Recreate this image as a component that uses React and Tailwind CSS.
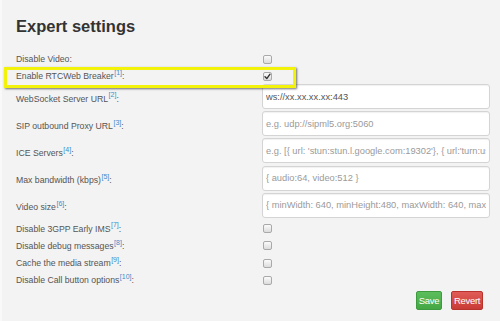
import React from "react";

function Sup({ n }) {
  return (
    <>
      <sup className="text-[7px] text-[#428bca] -top-[0.6em] ml-[0.5px]">[{n}]</sup>
      <span>:</span>
    </>
  );
}

function Checkbox({ checked }) {
  return (
    <div className="w-[9px] h-[9px] rounded-[2px] border border-[#a9a9a9] bg-gradient-to-b from-[#fbfbfb] to-[#dcdcdc] flex items-center justify-center">
      {checked && (
        <svg width="7" height="7" viewBox="0 0 7 7">
          <path d="M1 3.8 L2.8 5.6 L6 1.2" stroke="#333" strokeWidth="1.4" fill="none" strokeLinecap="round" strokeLinejoin="round" />
        </svg>
      )}
    </div>
  );
}

function CheckRow({ label, n, checked, h }) {
  return (
    <div className={`flex items-center ${h}`}>
      <div className="w-[262px] shrink-0 pl-[16px] text-[8.7px] leading-[10px] text-[#555]">
        {label}
        {n ? <Sup n={n} /> : <span>:</span>}
      </div>
      <div className="pl-[1px]">
        <Checkbox checked={checked} />
      </div>
    </div>
  );
}

function InputRow({ label, n, value, placeholder }) {
  return (
    <div className="flex items-start h-[25px] mb-[2.2px]">
      <div className="w-[262px] shrink-0 pl-[16px] pt-[9.5px] text-[8.7px] leading-[10px] text-[#555]">
        {label}
        <Sup n={n} />
      </div>
      <div className="w-[228px] shrink-0 h-[25px] bg-white border border-[#d4d4d4] rounded-[3px] shadow-[inset_0_1px_1px_rgba(0,0,0,0.06)] flex items-center px-[3px] overflow-hidden">
        <div className={`whitespace-nowrap overflow-hidden w-full text-[9.3px] leading-[12px] ${value ? "text-[#555]" : "text-[#9a9a9a]"}`}>
          {value || placeholder}
        </div>
      </div>
    </div>
  );
}

export default function App() {
  return (
    <div className="relative w-[500px] h-[321px] overflow-hidden bg-[#f3f3f3] font-['Liberation_Sans',Arial,sans-serif]">
      <div className="absolute left-0 top-0 w-[2px] h-full bg-[#f9f9f9]" />
      <div className="pl-[16px] pt-[16px] text-[16.5px] leading-[20px] font-bold text-[#333]">
        Expert settings
      </div>
      <div className="mt-[14px]">
        <CheckRow label="Disable Video" h="h-[18px]" />
        <CheckRow label="Enable RTCWeb Breaker" n={1} checked h="h-[16px]" />
        <InputRow label="WebSocket Server URL" n={2} value="ws://xx.xx.xx.xx:443" />
        <InputRow label="SIP outbound Proxy URL" n={3} placeholder="e.g. udp://sipml5.org:5060" />
        <InputRow
          label="ICE Servers"
          n={4}
          placeholder="e.g. [{ url: 'stun:stun.l.google.com:19302'}, { url:'turn:user@numb.viagenie.ca', credential:'myPassword'}]"
        />
        <InputRow label="Max bandwidth (kbps)" n={5} placeholder="{ audio:64, video:512 }" />
        <InputRow
          label="Video size"
          n={6}
          placeholder="{ minWidth: 640, minHeight:480, maxWidth: 640, maxHeight:480 }"
        />
        <CheckRow label="Disable 3GPP Early IMS" n={7} h="h-[17.3px]" />
        <CheckRow label="Disable debug messages" n={8} h="h-[17.3px]" />
        <CheckRow label="Cache the media stream" n={9} h="h-[17.3px]" />
        <CheckRow label="Disable Call button options" n={10} h="h-[17.3px]" />
        <div className="flex justify-end gap-[9px] pr-[17px] mt-[2px]">
          <button className="w-[26px] h-[19px] rounded-[2px] bg-gradient-to-b from-[#5cbd5c] to-[#44a744] border border-[#3d9a3d] text-white text-[9.5px] leading-[17px] tracking-[-0.3px]">
            Save
          </button>
          <button className="w-[32px] h-[19px] rounded-[2px] bg-gradient-to-b from-[#e05b57] to-[#c93a36] border border-[#b8322e] text-white text-[9.5px] leading-[17px] tracking-[-0.3px]">
            Revert
          </button>
        </div>
      </div>
      <div className="absolute left-[4px] top-[67px] w-[292px] h-[21px] border-[3px] border-[#f2f20a] shadow-[1px_1px_2px_rgba(0,0,0,0.55)]" />
    </div>
  );
}
